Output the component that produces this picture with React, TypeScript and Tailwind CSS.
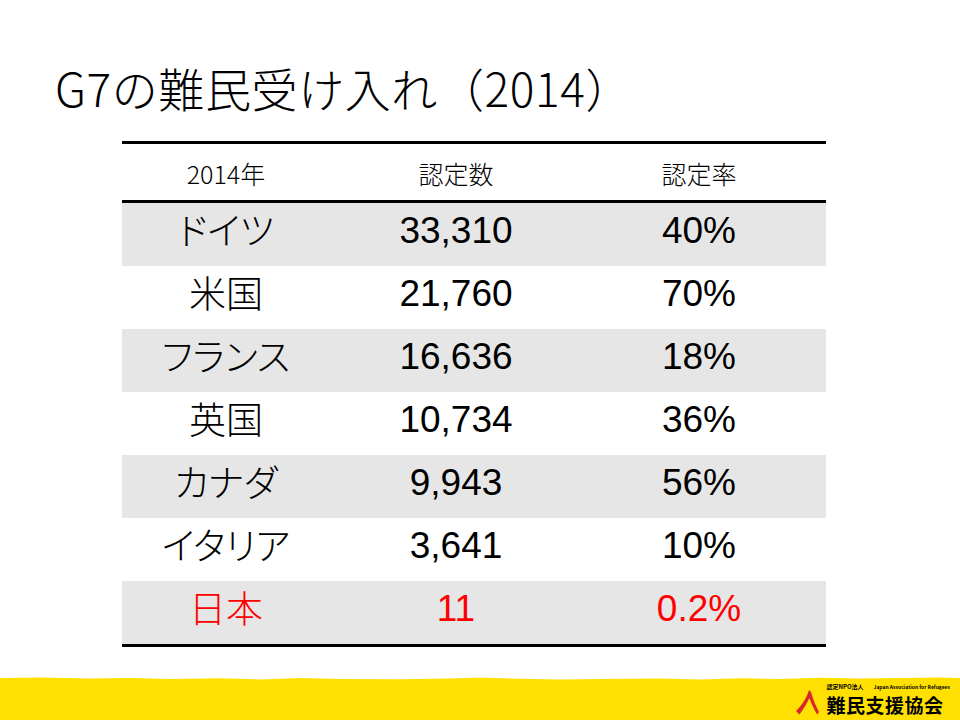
const rows = [
  { name: 'ドイツ', count: '33,310', rate: '40%' },
  { name: '米国', count: '21,760', rate: '70%' },
  { name: 'フランス', count: '16,636', rate: '18%' },
  { name: '英国', count: '10,734', rate: '36%' },
  { name: 'カナダ', count: '9,943', rate: '56%' },
  { name: 'イタリア', count: '3,641', rate: '10%' },
  { name: '日本', count: '11', rate: '0.2%', highlight: true },
]

function LogoMark() {
  return (
    <svg width="24" height="26" viewBox="0 0 24 26">
      <path d="M14 1 C12 8 8 15 1 22 L4.5 25.5 C9 19 12 14 14.5 9 C16 14 19 20 22 25.5 L24 23 C21 17 18 11 16 3 Z" fill="#d7262c" />
    </svg>
  )
}

function TornEdge() {
  return (
    <svg width="960" height="6" viewBox="0 0 960 6" preserveAspectRatio="none" className="block">
      <path
        d="M0 2 L40 1.5 L90 2.5 L130 2 L170 3 L220 2.2 L260 3.4 L300 2 L340 3 L400 3.2 L450 2.6 L480 1.6 L520 2.8 L560 3.4 L600 3 L660 2.4 L700 3.6 L740 2.2 L780 3 L820 1.8 L860 2.6 L900 2 L940 1.4 L960 2 L960 6 L0 6 Z"
        fill="#ffe000"
      />
    </svg>
  )
}

export default function App() {
  return (
    <div className="w-[960px] h-[720px] bg-white flex flex-col overflow-hidden [font-family:'Liberation_Sans','Noto_Sans_CJK_JP',sans-serif] text-black">
      {/* Title */}
      <h1 className="pl-[55px] pt-[64px] text-[46px] leading-[46px] tracking-[0.6px] [font-family:'Noto_Sans_CJK_JP',sans-serif] font-light">
        G7の難民受け入れ（2014）
      </h1>

      {/* Table */}
      <div className="ml-[122px] mt-[31px] w-[704px] border-t-[3px] border-b-[3px] border-black">
        <div className="grid grid-cols-[208px_252px_244px] h-[59px] items-center border-b-[3px] border-black text-[25px] font-light [font-family:'Noto_Sans_CJK_JP',sans-serif] pt-[4px]">
          <div className="text-center">2014年</div>
          <div className="text-center">認定数</div>
          <div className="text-center pr-[10px]">認定率</div>
        </div>
        {rows.map((r, i) => (
          <div
            key={r.name}
            className={`grid grid-cols-[208px_252px_244px] h-[63px] items-center text-[37px] leading-none font-light [font-feature-settings:'palt'] ${
              i % 2 === 0 ? 'bg-[#e6e6e6]' : 'bg-white'
            } ${r.highlight ? 'text-[#ff0000]' : 'text-black'}`}
          >
            <div className="text-center pb-[4px]">{r.name}</div>
            <div className="text-center pb-[8px]">{r.count}</div>
            <div className="text-center pr-[10px] pb-[8px]">{r.rate}</div>
          </div>
        ))}
      </div>

      {/* Footer band */}
      <div className="mt-auto">
        <TornEdge />
        <div className="h-[38px] bg-[#ffe000] flex justify-end items-end pr-[10px] pb-[5px]">
          <div className="flex items-end gap-[7px]">
            <LogoMark />
            <div className="flex flex-col">
              <div className="flex items-end gap-[10px] h-[7px] mb-[5px] [font-family:'Noto_Sans_CJK_JP',sans-serif] font-bold whitespace-nowrap">
                <span className="block text-[6px] leading-[7px]">認定NPO法人</span>
                <span className="block text-[5px] leading-[7px]">Japan Association for Refugees</span>
              </div>
              <div className="text-[19px] leading-[20px] font-bold tracking-[0.5px] [font-family:'Noto_Sans_CJK_JP',sans-serif]">
                難民支援協会
              </div>
            </div>
          </div>
        </div>
      </div>
    </div>
  )
}
